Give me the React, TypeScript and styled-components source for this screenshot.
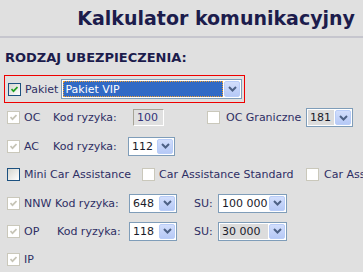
import React from "react";
import styled, { createGlobalStyle } from "styled-components";

const Global = createGlobalStyle`
  html, body { margin: 0; padding: 0; background: #e0e0e0; }
  body { font-family: "DejaVu Sans", Verdana, sans-serif; overflow: hidden; }
`;

const Page = styled.div`
  width: 363px;
  height: 272px;
  background: #e0e0e0;
  overflow: hidden;
`;

const Header = styled.div`
  height: 36px;
  border-bottom: 2px solid #c6c6ce;
  display: flex;
  align-items: center;
  justify-content: flex-end;
  padding-right: 8px;
`;

const Title = styled.h1`
  margin: 0;
  font-size: 19px;
  font-weight: bold;
  color: #1c1c4c;
  white-space: nowrap;
`;

const SectionTitle = styled.div`
  margin: 12px 0 0 5px;
  height: 25px;
  font-size: 13px;
  font-weight: bold;
  color: #1c1c4c;
  white-space: nowrap;
`;

const PakietBox = styled.div`
  margin-left: 4px;
  width: 241px;
  height: 28px;
  box-sizing: border-box;
  border: 1px solid #ee0000;
  display: flex;
  align-items: center;
  padding-left: 2px;
`;

const Row = styled.div<{ $h?: number }>`
  height: ${(p) => p.$h ?? 28}px;
  display: flex;
  align-items: center;
  padding-left: 7px;
  white-space: nowrap;
`;

const Label = styled.span<{ $w?: number; $ml?: number }>`
  font-size: 11px;
  color: #2e2e64;
  margin-left: ${(p) => p.$ml ?? 0}px;
  ${(p) => (p.$w ? `width: ${p.$w}px; flex: none;` : "")}
`;

const Box = styled.span<{ $disabled?: boolean; $ml?: number }>`
  width: 13px;
  height: 13px;
  box-sizing: border-box;
  flex: none;
  margin-left: ${(p) => p.$ml ?? 0}px;
  border: 1px solid ${(p) => (p.$disabled ? "#cac8bb" : "#1c5180")};
  background: ${(p) =>
    p.$disabled ? "#ffffff" : "linear-gradient(135deg, #d6d6cf 0%, #ffffff 100%)"};
  display: inline-flex;
  align-items: center;
  justify-content: center;
`;

const Check: React.FC<{ checked?: boolean; disabled?: boolean; ml?: number }> = ({
  checked,
  disabled,
  ml,
}) => (
  <Box $disabled={disabled} $ml={ml}>
    {checked && (
      <svg width="7" height="7" viewBox="0 0 7 7">
        <polyline
          points="0.5,3 2.5,5.2 6.5,1"
          fill="none"
          stroke={disabled ? "#c6c4b6" : "#21a121"}
          strokeWidth="1.7"
        />
      </svg>
    )}
  </Box>
);

const SelectFrame = styled.div<{ $w: number; $ml?: number; $h?: number }>`
  width: ${(p) => p.$w}px;
  height: ${(p) => p.$h ?? 19}px;
  margin-left: ${(p) => p.$ml ?? 0}px;
  box-sizing: border-box;
  flex: none;
  border: 1px solid #7f9db9;
  background: #ffffff;
  display: flex;
  align-items: center;
  padding: 1px;
  gap: 1px;
`;

const SelectValue = styled.span<{ $bg?: string; $focus?: boolean }>`
  flex: 1;
  align-self: stretch;
  display: flex;
  align-items: center;
  font-size: 11px;
  color: ${(p) => (p.$focus ? "#ffffff" : "#1a1a2a")};
  background: ${(p) => p.$bg ?? "transparent"};
  padding-left: 2px;
  box-sizing: border-box;
  overflow: hidden;
  ${(p) => (p.$focus ? "outline: 1px dotted #f0a030; outline-offset: -1px;" : "")}
`;

const DropBtn = styled.span`
  width: 16px;
  align-self: stretch;
  flex: none;
  box-sizing: border-box;
  border: 1px solid #b9cdf8;
  border-radius: 2px;
  background: linear-gradient(180deg, #d2defc 0%, #b6c9f6 100%);
  display: flex;
  align-items: center;
  justify-content: center;
`;

const Select: React.FC<{
  w: number;
  ml?: number;
  h?: number;
  value: string;
  bg?: string;
  focus?: boolean;
}> = ({ w, ml, h, value, bg, focus }) => (
  <SelectFrame $w={w} $ml={ml} $h={h}>
    <SelectValue $bg={focus ? "#316ac5" : bg} $focus={focus}>
      {value}
    </SelectValue>
    <DropBtn>
      <svg width="9" height="6" viewBox="0 0 9 6">
        <polyline
          points="1,1 4.5,4.5 8,1"
          fill="none"
          stroke="#4d6185"
          strokeWidth="2"
        />
      </svg>
    </DropBtn>
  </SelectFrame>
);

const TextInput = styled.span<{ $w: number; $ml?: number }>`
  width: ${(p) => p.$w}px;
  height: 17px;
  margin-left: ${(p) => p.$ml ?? 0}px;
  box-sizing: border-box;
  flex: none;
  border: 1px solid #a7a496;
  border-right-color: #ffffff;
  border-bottom-color: #ffffff;
  background: #e0e0e0;
  font-size: 11px;
  color: #33337a;
  display: flex;
  align-items: center;
  padding-left: 3px;
`;

export default function App() {
  return (
    <Page>
      <Global />
      <Header>
        <Title>Kalkulator komunikacyjny</Title>
      </Header>
      <SectionTitle>RODZAJ UBEZPIECZENIA:</SectionTitle>
      <PakietBox>
        <Check checked ml={1} />
        <Label $ml={4}>Pakiet</Label>
        <Select w={181} ml={3} h={20} value="Pakiet VIP" focus />
      </PakietBox>
      <Row $h={29}>
        <Check checked disabled />
        <Label $ml={4} $w={29}>OC</Label>
        <Label $w={80}>Kod ryzyka:</Label>
        <TextInput $w={31}>100</TextInput>
        <Check disabled ml={43} />
        <Label $ml={6} $w={80}>OC Graniczne</Label>
        <Select w={47} value="181" bg="#dcdcdc" />
      </Row>
      <Row $h={28}>
        <Check checked disabled />
        <Label $ml={4} $w={29}>AC</Label>
        <Label $w={75}>Kod ryzyka:</Label>
        <Select w={47} value="112" />
      </Row>
      <Row $h={29}>
        <Check />
        <Label $ml={4} $w={112}>Mini Car Assistance</Label>
        <Check disabled ml={6} />
        <Label $ml={4} $w={141}>Car Assistance Standard</Label>
        <Check disabled ml={6} />
        <Label $ml={5}>Car Assistance</Label>
      </Row>
      <Row $h={28}>
        <Check checked disabled />
        <Label $ml={4} $w={31}>NNW</Label>
        <Label $w={74}>Kod ryzyka:</Label>
        <Select w={48} value="648" />
        <Label $ml={17} $w={24}>SU:</Label>
        <Select w={69} value="100 000" />
      </Row>
      <Row $h={28}>
        <Check checked disabled />
        <Label $ml={4} $w={33}>OP</Label>
        <Label $w={72}>Kod ryzyka:</Label>
        <Select w={48} value="118" />
        <Label $ml={17} $w={24}>SU:</Label>
        <Select w={69} value="30 000" bg="#dcdcdc" />
      </Row>
      <Row $h={29}>
        <Check checked disabled />
        <Label $ml={4}>IP</Label>
      </Row>
    </Page>
  );
}
